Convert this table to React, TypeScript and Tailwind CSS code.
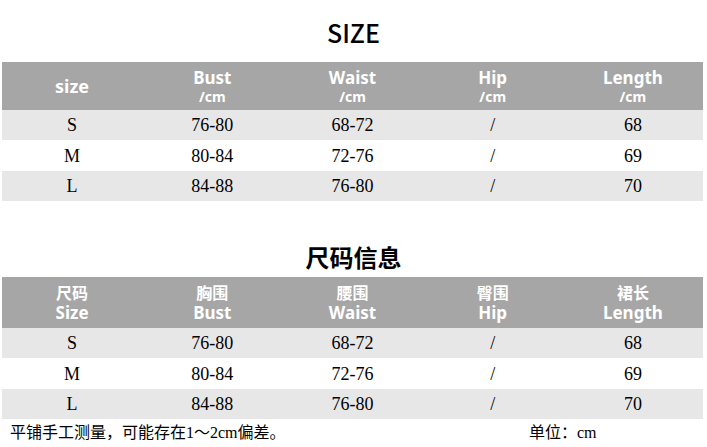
const rows = [
  ["S", "76-80", "68-72", "/", "68"],
  ["M", "80-84", "72-76", "/", "69"],
  ["L", "84-88", "76-80", "/", "70"],
];

const head = '"Noto Sans", "Noto Sans CJK SC", sans-serif';
const serif = '"Liberation Serif", "Noto Sans CJK SC", serif';

function Body() {
  return (
    <div>
      {rows.map((r, i) => (
        <div
          key={r[0]}
          className={`grid grid-cols-5 items-center text-[18px] text-black ${
            i % 2 === 0 ? "bg-[#e7e7e7]" : "bg-white"
          } ${i === 1 ? "h-[31px]" : "h-[30px]"}`}
          style={{ fontFamily: serif }}
        >
          {r.map((c, j) => (
            <div key={j} className="text-center leading-none">
              {c}
            </div>
          ))}
        </div>
      ))}
    </div>
  );
}

export default function App() {
  const enHead = ["Bust", "Waist", "Hip", "Length"];
  const cnHead = [
    ["尺码", "Size"],
    ["胸围", "Bust"],
    ["腰围", "Waist"],
    ["臀围", "Hip"],
    ["裙长", "Length"],
  ];

  return (
    <div className="w-[707px] h-[447px] bg-white overflow-hidden">
      <div className="h-[62px] flex items-center justify-center pt-[3px]">
        <h1
          className="text-[25px] font-medium text-black leading-none"
          style={{ fontFamily: '"Noto Sans CJK SC", sans-serif' }}
        >
          SIZE
        </h1>
      </div>

      <div className="ml-[2px] w-[701px]">
        <div
          className="grid grid-cols-5 h-[48px] items-center bg-[#a6a6a6] text-white font-bold"
          style={{ fontFamily: head }}
        >
          <div className="text-center text-[18px] leading-none">size</div>
          {enHead.map((h) => (
            <div key={h} className="flex flex-col items-center">
              <span className="text-[17px] leading-[20px]">{h}</span>
              <span className="text-[14px] leading-[17px]">/cm</span>
            </div>
          ))}
        </div>
        <Body />
      </div>

      <div className="pt-[44px] mb-[8px] flex justify-center">
        <h2
          className="text-[24px] font-bold text-black leading-[24px]"
          style={{ fontFamily: '"Noto Sans CJK SC", sans-serif' }}
        >
          尺码信息
        </h2>
      </div>

      <div className="ml-[2px] w-[701px]">
        <div
          className="grid grid-cols-5 h-[51px] items-center bg-[#a6a6a6] text-white font-bold"
          style={{ fontFamily: head }}
        >
          {cnHead.map(([cn, en]) => (
            <div key={en} className="flex flex-col items-center">
              <span className="text-[16px] leading-[20px]">{cn}</span>
              <span className="text-[17px] leading-[20px]">{en}</span>
            </div>
          ))}
        </div>
        <Body />
      </div>

      <div
        className="flex h-[28px] items-center text-[16px] text-black"
        style={{ fontFamily: serif }}
      >
        <span className="pl-[10px] w-[529px]">平铺手工测量，可能存在1～2cm偏差。</span>
        <span>单位：cm</span>
      </div>
    </div>
  );
}
